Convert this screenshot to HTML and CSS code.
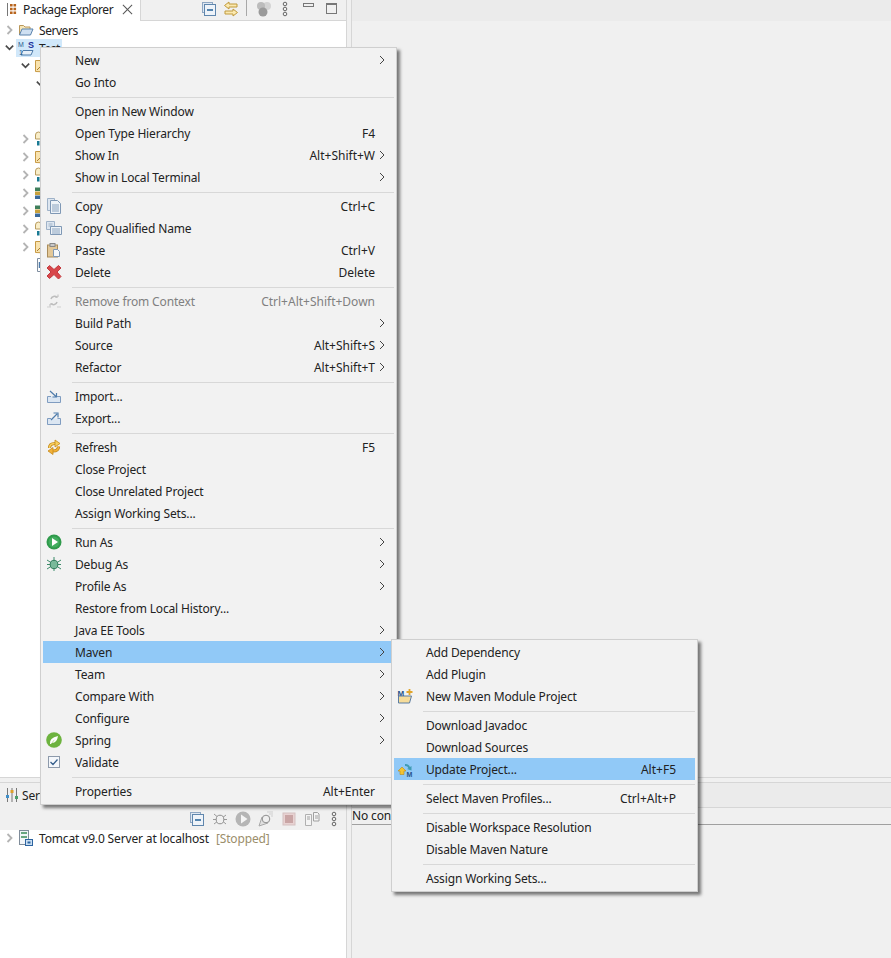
FILE: index.html
```html
<!DOCTYPE html>
<html lang="en">

<head>
    <meta charset="UTF-8">
    <title>Package Explorer - Maven menu</title>
    <link rel="stylesheet" href="styles.css">
</head>

<body>
    <svg class="icon-defs" width="0" height="0">
        <symbol id="chev-right" viewBox="0 0 10 12"><path d="M3 2l4 4-4 4" fill="none" stroke="#b4b4b4" stroke-width="1.8"/></symbol>
        <symbol id="chev-down" viewBox="0 0 12 10"><path d="M2 2.500l4 4 4-4" fill="none" stroke="#4a4a4a" stroke-width="1.8"/></symbol>
        <symbol id="sub-arrow" viewBox="0 0 6 10"><path d="M1 1l4 4-4 4" fill="none" stroke="#444" stroke-width="1"/></symbol>
        <symbol id="dots" viewBox="0 0 6 16"><g fill="none" stroke="#666" stroke-width="1"><circle cx="3" cy="3" r="1.800"/><circle cx="3" cy="8" r="1.800"/><circle cx="3" cy="13" r="1.800"/></g></symbol>
        <symbol id="collapse" viewBox="0 0 16 16"><rect x="1.500" y="1.500" width="10" height="10" fill="#dfe8f2" stroke="#8ea6c2"/><rect x="3.500" y="3.500" width="11" height="11" fill="#eef3f9" stroke="#5f86ad"/><path d="M6 9h6" stroke="#1f5f96" stroke-width="1.500"/></symbol>
        <symbol id="pkg-tab" viewBox="0 0 16 16"><path d="M2.500 2v13" stroke="#777"/><path d="M5 3h2.600v2.600H5zM8.500 3h2.600v2.600H8.500zM5 6.700h2.600v2.600H5zM8.500 6.700h2.600v2.600H8.500zM5 10.400h2.600V13H5zM8.500 10.400h2.600V13H8.500z" fill="#b8651e"/></symbol>
        <symbol id="link" viewBox="0 0 16 16"><path d="M6 1L1.500 4.500 6 8V6h8V3H6z" fill="#fbe9b0" stroke="#c09a3c"/><path d="M10 8l4.500 3.500L10 15v-2H2v-3h8z" fill="#fbe9b0" stroke="#c09a3c"/></symbol>
        <symbol id="coins" viewBox="0 0 16 16"><circle cx="11" cy="5" r="4" fill="#d4d4d4"/><circle cx="5" cy="5" r="4" fill="#bcbcbc"/><circle cx="7" cy="11" r="4.500" fill="#9a9a9a"/></symbol>
        <symbol id="folder-open" viewBox="0 0 16 16"><path d="M1.500 13V3.500h4l1.500 1.500h5v2" fill="#f6e6b8" stroke="#b9975a"/><path d="M1.500 13l2.500-6h11l-2.500 6z" fill="#cfe0f2" stroke="#5b83ad"/></symbol>
        <symbol id="maven-project" viewBox="0 0 16 16"><path d="M3 15l2-4.500h10l-2 4.500z" fill="#e6eff8" stroke="#4f7cab"/></symbol>
        <symbol id="src-folder" viewBox="0 0 16 16"><path d="M1.500 13.500V2.500h5l1.500 2h6v9.500z" fill="#f9e3ae" stroke="#c89a45"/><path d="M3 12l3-3" stroke="#a97f30"/></symbol>
        <symbol id="info-lib" viewBox="0 0 16 16"><path d="M1.500 8V4q0-3 3-3t3 3v4z" fill="#f9eec9" stroke="#b99c5e"/><path d="M3 10h2.500v4.500H3z" fill="#1a7a94"/></symbol>
        <symbol id="stack-lib" viewBox="0 0 16 16"><path d="M1 2.500h6v3.500H1z" fill="#3f7f5c"/><path d="M1 6.500h6V10H1z" fill="#c8a13c"/><path d="M1 10.500h6V14H1z" fill="#3b6a9b"/></symbol>
        <symbol id="file-doc" viewBox="0 0 16 16"><path d="M1.500 1.500h10v13h-10z" fill="#fff" stroke="#7f8ea0"/><path d="M3.500 5v6" stroke="#4f7cab" stroke-width="1.500"/></symbol>
        <symbol id="copy" viewBox="0 0 16 16"><path d="M1.500 0.500h7v12h-7z" fill="#dde6f0" stroke="#9fb2c8"/><path d="M4.500 2.500h7l3 3v10h-10z" fill="#eef3f8" stroke="#7f98b5"/><path d="M6 7h7M6 9h7M6 11h7M6 13h7" stroke="#8aa3bf"/></symbol>
        <symbol id="copy-name" viewBox="0 0 16 16"><path d="M0.500 1.500h8v8h-8z" fill="#dde6f0" stroke="#9fb2c8"/><path d="M2.500 4h4M2.500 6h4" stroke="#9fb2c8"/><path d="M4.500 6.500h11v8h-11z" fill="#eef3f8" stroke="#7f98b5"/><path d="M6 9h8M6 11h8M6 13h8" stroke="#8aa3bf"/></symbol>
        <symbol id="paste" viewBox="0 0 16 16"><rect x="1.500" y="3" width="10" height="12" fill="#e3c898" stroke="#a98c5b"/><rect x="4" y="1.500" width="5" height="3" fill="#c9c9c9" stroke="#888"/><path d="M7.500 7.500h4l2 2v5h-6z" fill="#f5f8fb" stroke="#7f98b5"/></symbol>
        <symbol id="delete" viewBox="0 0 16 16"><path d="M3.500 1.500L8 5.500l4.500-4 2.500 2.500-4 4 4 4.500-2.500 2.500L8 10.500l-4.500 4L1 12l4-4-4-4z" fill="#d8474b" stroke="#c23a3e"/></symbol>
        <symbol id="remove-ctx" viewBox="0 0 16 16"><path d="M5 6a3.500 3.500 0 016-1.500M11 9a3.500 3.500 0 01-6 1.500" fill="none" stroke="#bdbdbd" stroke-width="1.500"/><path d="M1 14h4M11 14h4" stroke="#cfcfcf"/><path d="M9 4h3V1.500M7 11H4v2.500" fill="none" stroke="#bdbdbd"/></symbol>
        <symbol id="import" viewBox="0 0 16 16"><path d="M1.500 8.500v6h13v-6h-3.500M5 8.500H1.500" fill="#dbe6f2" stroke="#7f9cc0"/><path d="M4 3l6 5.500M10.500 5v4h-4" fill="none" stroke="#4f7cab" stroke-width="1.200"/></symbol>
        <symbol id="export" viewBox="0 0 16 16"><path d="M1.500 8.500v6h13v-6h-3M5 8.500H1.500" fill="#dbe6f2" stroke="#7f9cc0"/><path d="M5 10l6-6M7.500 3H12v4.500" fill="none" stroke="#4f7cab" stroke-width="1.200"/></symbol>
        <symbol id="refresh" viewBox="0 0 16 16"><g fill="none"><path d="M3.500 9Q3.500 4.500 9 4.500" stroke="#c48a1d" stroke-width="3.200"/><path d="M3.500 9Q3.500 4.500 9 4.500" stroke="#f8cf5e" stroke-width="1.500"/><path d="M12.500 7.500Q12.500 12 7 12" stroke="#c48a1d" stroke-width="3.200"/><path d="M12.500 7.500Q12.500 12 7 12" stroke="#f3b137" stroke-width="1.500"/></g><path d="M9 1l5 3.500L9 8z" fill="#f8cf5e" stroke="#c48a1d" stroke-width=".8"/><path d="M7 8.500L2 12l5 3.500z" fill="#f3b137" stroke="#c48a1d" stroke-width=".8"/></symbol>
        <symbol id="run" viewBox="0 0 16 16"><circle cx="8" cy="8" r="7.500" fill="#2f9a4b"/><circle cx="8" cy="8" r="5.500" fill="#42ad5e"/><path d="M6 4l6 4-6 4z" fill="#fff"/></symbol>
        <symbol id="debug" viewBox="0 0 16 16"><path d="M1 4l14 9M15 4L1 13M8 1v14M1 8.500h14" stroke="#3d8c6a"/><ellipse cx="8" cy="8.500" rx="3.800" ry="4.200" fill="#79b99a" stroke="#2f7a5a"/></symbol>
        <symbol id="spring" viewBox="0 0 16 16"><circle cx="8" cy="8" r="7.800" fill="#6db33f"/><path d="M4 12q-1-6 8-8-1 7-6 7 2-3 4-4-3 1-5 5z" fill="#fff"/></symbol>
        <symbol id="check" viewBox="0 0 16 16"><rect x="2.500" y="2.500" width="11" height="11" fill="#f4f7fb" stroke="#8d9aab"/><path d="M4.500 8l2.500 2.500 4.500-5" fill="none" stroke="#365f8c" stroke-width="1.300"/></symbol>
        <symbol id="new-module" viewBox="0 0 16 16"><path d="M1.500 15V8h13l-2 7z" fill="#f6dc9a" stroke="#5b7da3"/><path d="M12.500 1v6M9.500 4h6" stroke="#e0a52c" stroke-width="1.800"/></symbol>
        <symbol id="update-project" viewBox="0 0 16 16"><path d="M8 3a5 5 0 015 3l1.500-1v4.500L10 8l1.500-.7A3.500 3.500 0 008 5z" fill="#3f9bb3"/><path d="M1 10l4-4 4 4H7v3.500H3V10z" fill="#f2c230" stroke="#b98c1a" stroke-width=".6"/></symbol>
        <symbol id="servers-tab" viewBox="0 0 16 16"><path d="M3.500 1v14M8 1v14M12.500 1v14" stroke="#777"/><rect x="2" y="8" width="3" height="3" fill="#3f8fc9"/><rect x="6.500" y="3" width="3" height="3" fill="#dca02c"/><rect x="11" y="9" width="3" height="3" fill="#4aa06a"/></symbol>
        <symbol id="debug-gray" viewBox="0 0 16 16"><path d="M2 3l12 10M14 4L2 13M1 8.500h14" stroke="#9a9a9a"/><ellipse cx="8" cy="8.500" rx="3.800" ry="4.300" fill="#f0f0f0" stroke="#8f8f8f"/></symbol>
        <symbol id="run-gray" viewBox="0 0 16 16"><circle cx="8" cy="8" r="7.500" fill="#b5b5b5"/><path d="M6 3.500l6.500 4.500L6 12.500z" fill="#f4f4f4"/></symbol>
        <symbol id="profile-gray" viewBox="0 0 16 16"><path d="M1 15l3-9 6 6z" fill="#e0e0e0" stroke="#a8a8a8"/><circle cx="8" cy="8" r="3.800" fill="#efefef" stroke="#8f8f8f"/><path d="M9 1h6M11 3h4M13 5h2" stroke="#cfcfcf"/></symbol>
        <symbol id="stop-gray" viewBox="0 0 16 16"><rect x="2" y="2" width="12" height="12" fill="#e8d2d2" stroke="#d4c0c0"/><rect x="4" y="4" width="8" height="8" fill="#c9a5a5"/></symbol>
        <symbol id="publish-gray" viewBox="0 0 16 16"><path d="M1.500 3.500h6v11h-6z" fill="#f4f4f4" stroke="#b0b0b0"/><path d="M9.500 1.500h4l1.500 1.500v7H9.500z" fill="#f4f4f4" stroke="#a0a0a0"/><path d="M3 6h3M3 8h3M11 5h3M11 7h3" stroke="#a0a0a0"/></symbol>
        <symbol id="server" viewBox="0 0 16 16"><rect x="1.500" y="0.500" width="9" height="14" fill="#f2f5f8" stroke="#7f8c9a"/><path d="M3 3h6M3 7h6" stroke="#3d8c5a" stroke-width="1.500"/><rect x="7.500" y="9.500" width="7" height="6" fill="#c9def2" stroke="#2d64a0"/><rect x="9.500" y="11.500" width="3" height="2" fill="#2d64a0"/></symbol>
    </svg>

    <div class="workbench">
        <section class="view explorer-view">
            <div class="view-head">
                <div class="tab">
                    <svg class="tab-icon"><use href="#pkg-tab"/></svg>
                    <span class="tight">Package Explorer</span>
                    <span class="tab-close"></span>
                </div>
                <div class="toolbar">
                    <svg class="tool tool-collapse"><use href="#collapse"/></svg>
                    <svg class="tool tool-link"><use href="#link"/></svg>
                    <span class="tool-sep"></span>
                    <svg class="tool tool-coins"><use href="#coins"/></svg>
                    <svg class="tool-dots"><use href="#dots"/></svg>
                    <span class="btn-min"></span>
                    <span class="btn-max"></span>
                </div>
            </div>
            <div class="tree">
                <div class="row">
                    <svg class="chev"><use href="#chev-right"/></svg>
                    <svg class="node-icon"><use href="#folder-open"/></svg>
                    <span class="tight">Servers</span>
                </div>
                <div class="row">
                    <svg class="chev"><use href="#chev-down"/></svg>
                    <span class="selected">
                        <svg class="node-icon" viewBox="0 0 16 16">
                            <use href="#maven-project"/>
                            <text x="0" y="6.500" class="glyph-m">M</text>
                            <text x="10" y="8" class="glyph-s">S</text>
                            <text x="1" y="15" class="glyph-m">1</text>
                        </svg>
                        <span class="tight">Test</span>
                    </span>
                </div>
                <div class="row level1">
                    <svg class="chev"><use href="#chev-down"/></svg>
                    <svg class="node-icon"><use href="#src-folder"/></svg>
                </div>
                <div class="row level2">
                    <svg class="chev"><use href="#chev-down"/></svg>
                </div>
                <div class="tree-gap"></div>
                <div class="row level1">
                    <svg class="chev"><use href="#chev-right"/></svg>
                    <svg class="node-icon"><use href="#info-lib"/></svg>
                </div>
                <div class="row level1">
                    <svg class="chev"><use href="#chev-right"/></svg>
                    <svg class="node-icon"><use href="#src-folder"/></svg>
                </div>
                <div class="row level1">
                    <svg class="chev"><use href="#chev-right"/></svg>
                    <svg class="node-icon"><use href="#info-lib"/></svg>
                </div>
                <div class="row level1">
                    <svg class="chev"><use href="#chev-right"/></svg>
                    <svg class="node-icon"><use href="#stack-lib"/></svg>
                </div>
                <div class="row level1">
                    <svg class="chev"><use href="#chev-right"/></svg>
                    <svg class="node-icon"><use href="#stack-lib"/></svg>
                </div>
                <div class="row level1">
                    <svg class="chev"><use href="#chev-right"/></svg>
                    <svg class="node-icon"><use href="#info-lib"/></svg>
                </div>
                <div class="row level1">
                    <svg class="chev"><use href="#chev-right"/></svg>
                    <svg class="node-icon"><use href="#src-folder"/></svg>
                </div>
                <div class="row level1-file">
                    <svg class="node-icon"><use href="#file-doc"/></svg>
                </div>
            </div>
        </section>

        <section class="view editor-view">
            <div class="editor-head"></div>
        </section>

        <section class="view servers-view">
            <div class="servers-head">
                <div class="servers-tab">
                    <svg class="tab-icon"><use href="#servers-tab"/></svg>
                    <span>Servers</span>
                </div>
            </div>
            <div class="servers-tools">
                <svg class="tool2"><use href="#collapse"/></svg>
                <svg class="tool2"><use href="#debug-gray"/></svg>
                <svg class="tool2"><use href="#run-gray"/></svg>
                <svg class="tool2"><use href="#profile-gray"/></svg>
                <svg class="tool2"><use href="#stop-gray"/></svg>
                <svg class="tool2"><use href="#publish-gray"/></svg>
                <svg class="tool-dots tool-dots-end"><use href="#dots"/></svg>
            </div>
            <div class="servers-list">
                <div class="row">
                    <svg class="chev"><use href="#chev-right"/></svg>
                    <svg class="node-icon"><use href="#server"/></svg>
                    <span>Tomcat v9.0 Server at localhost</span>
                    <span class="state">[Stopped]</span>
                </div>
            </div>
        </section>

        <section class="view console-view">
            <div class="console-head"></div>
            <div class="console-msg">No consoles to display at this time.</div>
        </section>
    </div>

    <div class="menu main-menu">
        <div class="item"><span class="slot"></span><span class="label">New</span><span class="key"></span><svg class="arrow"><use href="#sub-arrow"/></svg></div>
        <div class="item"><span class="slot"></span><span class="label">Go Into</span></div>
        <div class="sep"></div>
        <div class="item"><span class="slot"></span><span class="label">Open in New Window</span></div>
        <div class="item"><span class="slot"></span><span class="label">Open Type Hierarchy</span><span class="key">F4</span></div>
        <div class="item"><span class="slot"></span><span class="label">Show In</span><span class="key">Alt+Shift+W</span><svg class="arrow"><use href="#sub-arrow"/></svg></div>
        <div class="item"><span class="slot"></span><span class="label">Show in Local Terminal</span><span class="key"></span><svg class="arrow"><use href="#sub-arrow"/></svg></div>
        <div class="sep"></div>
        <div class="item"><span class="slot"><svg class="icon"><use href="#copy"/></svg></span><span class="label">Copy</span><span class="key">Ctrl+C</span></div>
        <div class="item"><span class="slot"><svg class="icon"><use href="#copy-name"/></svg></span><span class="label">Copy Qualified Name</span></div>
        <div class="item"><span class="slot"><svg class="icon"><use href="#paste"/></svg></span><span class="label">Paste</span><span class="key">Ctrl+V</span></div>
        <div class="item"><span class="slot"><svg class="icon"><use href="#delete"/></svg></span><span class="label">Delete</span><span class="key">Delete</span></div>
        <div class="sep"></div>
        <div class="item disabled"><span class="slot"><svg class="icon"><use href="#remove-ctx"/></svg></span><span class="label">Remove from Context</span><span class="key">Ctrl+Alt+Shift+Down</span></div>
        <div class="item"><span class="slot"></span><span class="label">Build Path</span><span class="key"></span><svg class="arrow"><use href="#sub-arrow"/></svg></div>
        <div class="item"><span class="slot"></span><span class="label">Source</span><span class="key">Alt+Shift+S</span><svg class="arrow"><use href="#sub-arrow"/></svg></div>
        <div class="item"><span class="slot"></span><span class="label">Refactor</span><span class="key">Alt+Shift+T</span><svg class="arrow"><use href="#sub-arrow"/></svg></div>
        <div class="sep"></div>
        <div class="item"><span class="slot"><svg class="icon"><use href="#import"/></svg></span><span class="label">Import...</span></div>
        <div class="item"><span class="slot"><svg class="icon"><use href="#export"/></svg></span><span class="label">Export...</span></div>
        <div class="sep"></div>
        <div class="item"><span class="slot"><svg class="icon"><use href="#refresh"/></svg></span><span class="label">Refresh</span><span class="key">F5</span></div>
        <div class="item"><span class="slot"></span><span class="label">Close Project</span></div>
        <div class="item"><span class="slot"></span><span class="label">Close Unrelated Project</span></div>
        <div class="item"><span class="slot"></span><span class="label">Assign Working Sets...</span></div>
        <div class="sep"></div>
        <div class="item"><span class="slot"><svg class="icon"><use href="#run"/></svg></span><span class="label">Run As</span><span class="key"></span><svg class="arrow"><use href="#sub-arrow"/></svg></div>
        <div class="item"><span class="slot"><svg class="icon"><use href="#debug"/></svg></span><span class="label">Debug As</span><span class="key"></span><svg class="arrow"><use href="#sub-arrow"/></svg></div>
        <div class="item"><span class="slot"></span><span class="label">Profile As</span><span class="key"></span><svg class="arrow"><use href="#sub-arrow"/></svg></div>
        <div class="item"><span class="slot"></span><span class="label">Restore from Local History...</span></div>
        <div class="item"><span class="slot"></span><span class="label">Java EE Tools</span><span class="key"></span><svg class="arrow"><use href="#sub-arrow"/></svg></div>
        <div class="item active"><span class="slot"></span><span class="label">Maven</span><span class="key"></span><svg class="arrow"><use href="#sub-arrow"/></svg></div>
        <div class="item"><span class="slot"></span><span class="label">Team</span><span class="key"></span><svg class="arrow"><use href="#sub-arrow"/></svg></div>
        <div class="item"><span class="slot"></span><span class="label">Compare With</span><span class="key"></span><svg class="arrow"><use href="#sub-arrow"/></svg></div>
        <div class="item"><span class="slot"></span><span class="label">Configure</span><span class="key"></span><svg class="arrow"><use href="#sub-arrow"/></svg></div>
        <div class="item"><span class="slot"><svg class="icon"><use href="#spring"/></svg></span><span class="label">Spring</span><span class="key"></span><svg class="arrow"><use href="#sub-arrow"/></svg></div>
        <div class="item"><span class="slot"><svg class="icon"><use href="#check"/></svg></span><span class="label">Validate</span></div>
        <div class="sep"></div>
        <div class="item"><span class="slot"></span><span class="label">Properties</span><span class="key">Alt+Enter</span></div>
    </div>

    <div class="menu sub-menu">
        <div class="item"><span class="slot"></span><span class="label">Add Dependency</span></div>
        <div class="item"><span class="slot"></span><span class="label">Add Plugin</span></div>
        <div class="item">
            <span class="slot">
                <svg class="icon" viewBox="0 0 16 16">
                    <use href="#new-module"/>
                    <text x="0.500" y="8" class="glyph-b">M</text>
                </svg>
            </span>
            <span class="label">New Maven Module Project</span>
        </div>
        <div class="sep"></div>
        <div class="item"><span class="slot"></span><span class="label">Download Javadoc</span></div>
        <div class="item"><span class="slot"></span><span class="label">Download Sources</span></div>
        <div class="item active">
            <span class="slot">
                <svg class="icon" viewBox="0 0 16 16">
                    <use href="#update-project"/>
                    <text x="9.500" y="15.500" class="glyph-c">M</text>
                </svg>
            </span>
            <span class="label">Update Project...</span>
            <span class="key">Alt+F5</span>
        </div>
        <div class="sep"></div>
        <div class="item"><span class="slot"></span><span class="label">Select Maven Profiles...</span><span class="key">Ctrl+Alt+P</span></div>
        <div class="sep"></div>
        <div class="item"><span class="slot"></span><span class="label">Disable Workspace Resolution</span></div>
        <div class="item"><span class="slot"></span><span class="label">Disable Maven Nature</span></div>
        <div class="sep"></div>
        <div class="item"><span class="slot"></span><span class="label">Assign Working Sets...</span></div>
    </div>
</body>

</html>
```

FILE: styles.css
```css
:root {
    --window: #f0f0f0;
    --band: #ebebeb;
    --line: #d6d6d6;
    --text: #222222;
    --hilite: #91c9f7;
}

* {
    box-sizing: border-box;
}

html,
body {
    margin: 0;
    height: 958px;
    overflow: hidden;
}

body {
    position: relative;
    background-color: var(--window);
    color: var(--text);
    font-family: "Noto Sans", sans-serif;
    font-size: 12px;
    letter-spacing: -0.15px;
}

svg {
    display: block;
    flex: none;
}

.icon-defs {
    position: absolute;
}

.tight {
    letter-spacing: -0.45px;
}

/* letters inside the small project icons */
.glyph-m,
.glyph-s,
.glyph-b,
.glyph-c {
    font-family: "Liberation Sans", sans-serif;
    letter-spacing: 0;
}

.glyph-m {
    font-size: 7px;
    fill: #2b5c8c;
}

.glyph-s {
    font-size: 9px;
    font-weight: bold;
    fill: #20309a;
}

.glyph-b {
    font-size: 8px;
    font-weight: bold;
    fill: #27548a;
}

.glyph-c {
    font-size: 7px;
    font-weight: bold;
    fill: #27548a;
}

.workbench {
    display: grid;
    grid-template-columns: 347px 1fr;
    grid-template-rows: 778px 176px;
    gap: 4px;
    height: 958px;
}

/* views */
.view {
    display: flex;
    flex-direction: column;
    min-width: 0;
    overflow: hidden;
}

.explorer-view {
    border-right: 1px solid var(--line);
    border-bottom: 1px solid var(--line);
    background-color: #fff;
}

.view-head {
    display: flex;
    height: 21px;
    flex: none;
}

.tab {
    display: flex;
    align-items: center;
    width: 141px;
    padding: 0 0 3px 5px;
    border-right: 1px solid var(--line);
    white-space: nowrap;
}

.tab-icon {
    width: 16px;
    height: 16px;
    margin-right: 2px;
}

.tab-close {
    position: relative;
    flex: none;
    width: 11px;
    height: 11px;
    margin-left: 9px;
}

.tab-close::before,
.tab-close::after {
    content: "";
    position: absolute;
    top: 5px;
    left: -1px;
    width: 13px;
    height: 1px;
    background-color: #555;
    transform: rotate(45deg);
}

.tab-close::after {
    transform: rotate(-45deg);
}

.toolbar {
    display: flex;
    align-items: flex-start;
    flex: 1;
    padding: 1px 0 0 60px;
    border-bottom: 1px solid var(--line);
    background-color: var(--window);
}

.tool {
    width: 16px;
    height: 16px;
}

.tool-collapse {
    margin-right: 6px;
}

.tool-sep {
    width: 1px;
    height: 16px;
    margin: -1px 9px 0 7px;
    background-color: #a8a8a8;
}

.tool-coins {
    margin-right: 10px;
}

.tool-dots {
    width: 6px;
    height: 16px;
}

.tool-dots-end {
    margin-left: 4px;
}

.btn-min {
    width: 11px;
    height: 4px;
    margin: 2px 0 0 15px;
    border: 1px solid #777;
}

.btn-max {
    width: 11px;
    height: 11px;
    margin: 2px 0 0 12px;
    border: 1px solid #777;
    border-top-width: 2px;
}

.row {
    display: flex;
    align-items: center;
    height: 18px;
    padding-left: 4px;
    white-space: nowrap;
}

.chev {
    width: 11px;
    height: 12px;
    margin-right: 3px;
}

.node-icon {
    width: 16px;
    height: 16px;
    margin-right: 5px;
}

.selected {
    display: flex;
    align-items: center;
    width: 46px;
    height: 18px;
    margin-left: -2px;
    padding-left: 2px;
    background-color: #d1e8fa;
}

.level1 {
    padding-left: 20px;
}

.level2 {
    padding-left: 35px;
}

.level1-file {
    padding-left: 36px;
}

.tree-gap {
    height: 37px;
}

.editor-view {
    border-left: 1px solid var(--line);
    border-bottom: 1px solid var(--line);
}

.editor-head {
    height: 21px;
    background-color: var(--band);
}

.servers-view {
    border-right: 1px solid var(--line);
    border-top: 1px solid var(--line);
}

.servers-head {
    height: 24px;
    flex: none;
}

.servers-tab {
    display: flex;
    align-items: center;
    height: 24px;
    padding-left: 4px;
}

.servers-tools {
    display: flex;
    align-items: center;
    flex: none;
    height: 23px;
    padding-left: 189px;
    gap: 7px;
}

.tool2 {
    width: 16px;
    height: 16px;
}

.servers-list {
    flex: 1;
    background-color: #fff;
}

.servers-list .row {
    height: 16px;
}

.state {
    margin-left: 7px;
    color: #9b8e6b;
}

.console-view {
    border-left: 1px solid var(--line);
    border-top: 1px solid var(--line);
}

.console-head {
    height: 25px;
    flex: none;
    border-bottom: 1px solid var(--line);
    background-color: var(--band);
}

.console-msg {
    height: 17px;
    line-height: 15px;
    border-bottom: 1px solid #a0a0a0;
    white-space: nowrap;
}

/* popup menus */
.menu {
    position: absolute;
    padding: 1px 2px 2px;
    border: 1px solid #cfcfcf;
    background-color: #f2f2f2;
    box-shadow: 3px 3px 3px rgba(0, 0, 0, 0.5);
}

.main-menu {
    top: 47px;
    left: 40px;
    width: 357px;
    height: 758px;
}

.sub-menu {
    top: 639px;
    left: 391px;
    width: 307px;
    height: 253px;
}

.item {
    display: flex;
    align-items: center;
    height: 22px;
    white-space: nowrap;
}

.slot {
    display: flex;
    align-items: center;
    width: 32px;
    height: 22px;
    flex: none;
    padding-left: 3px;
}

.icon {
    width: 16px;
    height: 16px;
}

.label {
    flex: 1;
}

.key {
    margin-right: 19px;
    letter-spacing: 0;
}

.arrow {
    width: 6px;
    height: 10px;
    margin: 0 9px 0 -15px;
}

.active {
    background-color: var(--hilite);
}

.disabled {
    color: #808080;
}

.sep {
    height: 7px;
    margin-left: 29px;
    padding-top: 4px;
}

.sep::before {
    content: "";
    display: block;
    height: 1px;
    background-color: #d8d8d8;
}
```
